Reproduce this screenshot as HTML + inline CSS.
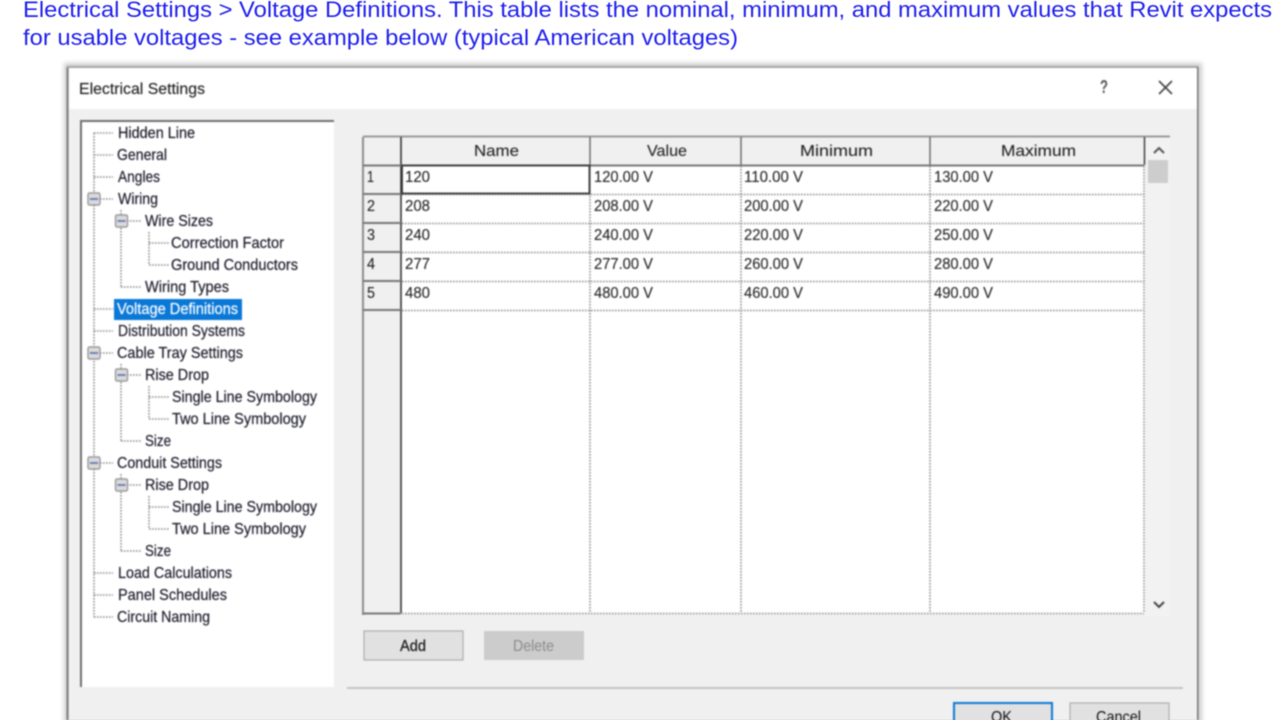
<!DOCTYPE html>
<html><head><meta charset="utf-8"><title>Electrical Settings</title>
<style>
html,body{margin:0;padding:0;background:#fff;width:1280px;height:720px;overflow:hidden}
svg{position:absolute;left:0;top:0;display:block}
text{font-family:"Liberation Sans",sans-serif}
#d{filter:blur(.7px)}
#t{filter:blur(.55px)}
#s{filter:blur(2.5px)}
.x text{font-size:16px;fill:#1c1c2c;stroke:#1c1c2c;stroke-width:.2px}
.g text{font-size:16px;fill:#222;stroke:#222;stroke-width:.1px}
.dot{stroke:#8c8c8c;stroke-width:1.5;stroke-dasharray:1.6 1.4;fill:none}
.b{fill:#dadada;stroke:#999;stroke-width:1.4}
.m{fill:#7080b8}
</style></head>
<body>
<svg width="1280" height="720" viewBox="0 0 1280 720" xmlns="http://www.w3.org/2000/svg">
<g id="t" fill="#2020ee" font-size="22.5">
<text x="23" y="17" textLength="1249" lengthAdjust="spacingAndGlyphs">Electrical Settings &gt; Voltage Definitions. This table lists the nominal, minimum, and maximum values that Revit expects</text>
<text x="23" y="45" textLength="715" lengthAdjust="spacingAndGlyphs">for usable voltages - see example below (typical American voltages)</text>
</g>
<rect id="s" x="64" y="63" width="1138" height="670" fill="#cfcfcf"/>
<g id="d">
<path d="M67.500 720 V67" stroke="#808080" stroke-width="2"/>
<path d="M67 67 H1198" stroke="#a8a8a8" stroke-width="2"/>
<path d="M1197.500 67 V720" stroke="#777" stroke-width="2"/>
<rect x="69" y="68" width="1128" height="652" fill="#f0f0f0"/>
<rect x="69" y="68" width="1128" height="41" fill="#fff"/>
<text x="79" y="94" font-size="16" fill="#222" stroke="#222" stroke-width=".15" textLength="126" lengthAdjust="spacingAndGlyphs">Electrical Settings</text>
<text x="1100" y="93" font-size="18" font-weight="bold" fill="#555" textLength="8" lengthAdjust="spacingAndGlyphs">?</text>
<path d="M1159 81 L1172 94 M1172 81 L1159 94" stroke="#444" stroke-width="1.600" fill="none"/>

<!-- tree -->
<rect x="80" y="120" width="254" height="567" fill="#fff"/>
<path d="M81 687 V121 H334" stroke="#6e6e6e" stroke-width="2" fill="none"/>
<path class="dot" d="M94 133 V617 M94 133 H113 M94 155 H113 M94 177 H113 M94 199 H113 M94 309 H113 M94 331 H113 M94 353 H113 M94 463 H113 M94 573 H113 M94 595 H113 M94 617 H113
M121 210 V287 M121 221 H141 M121 287 H141 M149 232 V265 M149 243 H169 M149 265 H169
M121 364 V441 M121 375 H141 M121 441 H141 M149 386 V419 M149 397 H169 M149 419 H169
M121 474 V551 M121 485 H141 M121 551 H141 M149 496 V529 M149 507 H169 M149 529 H169"/>
<g>
<rect class="b" x="88" y="193" width="12" height="12" rx="1.500"/><rect class="m" x="90" y="198" width="8" height="2"/>
<rect class="b" x="115.500" y="215" width="12" height="12" rx="1.500"/><rect class="m" x="117.500" y="220" width="8" height="2"/>
<rect class="b" x="88" y="347" width="12" height="12" rx="1.500"/><rect class="m" x="90" y="352" width="8" height="2"/>
<rect class="b" x="115.500" y="369" width="12" height="12" rx="1.500"/><rect class="m" x="117.500" y="374" width="8" height="2"/>
<rect class="b" x="88" y="457" width="12" height="12" rx="1.500"/><rect class="m" x="90" y="462" width="8" height="2"/>
<rect class="b" x="115.500" y="479" width="12" height="12" rx="1.500"/><rect class="m" x="117.500" y="484" width="8" height="2"/>
</g>
<rect x="114" y="299" width="128" height="21" fill="#0a78d7"/>
<g class="x">
<text x="118" y="138" textLength="77" lengthAdjust="spacingAndGlyphs">Hidden Line</text>
<text x="117" y="160" textLength="50" lengthAdjust="spacingAndGlyphs">General</text>
<text x="118" y="182" textLength="42" lengthAdjust="spacingAndGlyphs">Angles</text>
<text x="118" y="204" textLength="40" lengthAdjust="spacingAndGlyphs">Wiring</text>
<text x="145" y="226" textLength="68" lengthAdjust="spacingAndGlyphs">Wire Sizes</text>
<text x="171" y="248" textLength="113" lengthAdjust="spacingAndGlyphs">Correction Factor</text>
<text x="171" y="270" textLength="127" lengthAdjust="spacingAndGlyphs">Ground Conductors</text>
<text x="145" y="292" textLength="84" lengthAdjust="spacingAndGlyphs">Wiring Types</text>
<text x="117" y="314" textLength="121" lengthAdjust="spacingAndGlyphs" style="fill:#fff;stroke:#fff">Voltage Definitions</text>
<text x="118" y="336" textLength="127" lengthAdjust="spacingAndGlyphs">Distribution Systems</text>
<text x="117" y="358" textLength="126" lengthAdjust="spacingAndGlyphs">Cable Tray Settings</text>
<text x="145" y="380" textLength="64" lengthAdjust="spacingAndGlyphs">Rise Drop</text>
<text x="172" y="402" textLength="145" lengthAdjust="spacingAndGlyphs">Single Line Symbology</text>
<text x="172" y="424" textLength="134" lengthAdjust="spacingAndGlyphs">Two Line Symbology</text>
<text x="145" y="446" textLength="26" lengthAdjust="spacingAndGlyphs">Size</text>
<text x="117" y="468" textLength="105" lengthAdjust="spacingAndGlyphs">Conduit Settings</text>
<text x="145" y="490" textLength="64" lengthAdjust="spacingAndGlyphs">Rise Drop</text>
<text x="172" y="512" textLength="145" lengthAdjust="spacingAndGlyphs">Single Line Symbology</text>
<text x="172" y="534" textLength="134" lengthAdjust="spacingAndGlyphs">Two Line Symbology</text>
<text x="145" y="556" textLength="26" lengthAdjust="spacingAndGlyphs">Size</text>
<text x="118" y="578" textLength="114" lengthAdjust="spacingAndGlyphs">Load Calculations</text>
<text x="118" y="600" textLength="109" lengthAdjust="spacingAndGlyphs">Panel Schedules</text>
<text x="117" y="622" textLength="93" lengthAdjust="spacingAndGlyphs">Circuit Naming</text>
</g>

<!-- grid -->
<rect x="1145" y="136" width="25" height="480" fill="#f2f2f2"/>
<rect x="401" y="165" width="744" height="449" fill="#fff"/>
<rect x="363" y="137" width="782" height="28" fill="#f0f0f0"/>
<path d="M363 136.500 H1170" stroke="#999" stroke-width="2"/>
<path d="M363 137 V615" stroke="#8c8c8c" stroke-width="2"/>
<path d="M401 137 V613" stroke="#333" stroke-width="1.600"/>
<path d="M590 137 V165 M741 137 V165 M930 137 V165" stroke="#666" stroke-width="1.400"/>
<path d="M1144.500 137 V165" stroke="#333" stroke-width="1.400"/>
<path d="M363 165.500 H1144" stroke="#777" stroke-width="2"/>
<path d="M363 194 H401 M363 223 H401 M363 252 H401 M363 281 H401 M363 310 H401 M363 613.500 H401" stroke="#777" stroke-width="2"/>
<path class="dot" d="M590 166 V613 M741 166 V613 M930 166 V613 M1144 166 V613 M402 194.500 H1144 M402 223.500 H1144 M402 252.500 H1144 M402 281.500 H1144 M402 310.500 H1144 M402 613.500 H1144"/>
<rect x="402" y="165.500" width="187.500" height="28" fill="#fff" stroke="#333" stroke-width="1.800"/>
<g class="g">
<text x="474" y="156" textLength="45" lengthAdjust="spacingAndGlyphs">Name</text>
<text x="647" y="156" textLength="40" lengthAdjust="spacingAndGlyphs">Value</text>
<text x="800" y="156" textLength="73" lengthAdjust="spacingAndGlyphs">Minimum</text>
<text x="1001" y="156" textLength="75" lengthAdjust="spacingAndGlyphs">Maximum</text>

<text x="367" y="182" textLength="7" lengthAdjust="spacingAndGlyphs">1</text><text x="405" y="182" textLength="25" lengthAdjust="spacingAndGlyphs">120</text><text x="594" y="182" textLength="59" lengthAdjust="spacingAndGlyphs">120.00 V</text><text x="744" y="182" textLength="59" lengthAdjust="spacingAndGlyphs">110.00 V</text><text x="934" y="182" textLength="59" lengthAdjust="spacingAndGlyphs">130.00 V</text>
<text x="367" y="211" textLength="8" lengthAdjust="spacingAndGlyphs">2</text><text x="405" y="211" textLength="25" lengthAdjust="spacingAndGlyphs">208</text><text x="594" y="211" textLength="59" lengthAdjust="spacingAndGlyphs">208.00 V</text><text x="744" y="211" textLength="59" lengthAdjust="spacingAndGlyphs">200.00 V</text><text x="934" y="211" textLength="59" lengthAdjust="spacingAndGlyphs">220.00 V</text>
<text x="367" y="240" textLength="8" lengthAdjust="spacingAndGlyphs">3</text><text x="405" y="240" textLength="25" lengthAdjust="spacingAndGlyphs">240</text><text x="594" y="240" textLength="59" lengthAdjust="spacingAndGlyphs">240.00 V</text><text x="744" y="240" textLength="59" lengthAdjust="spacingAndGlyphs">220.00 V</text><text x="934" y="240" textLength="59" lengthAdjust="spacingAndGlyphs">250.00 V</text>
<text x="367" y="269" textLength="8" lengthAdjust="spacingAndGlyphs">4</text><text x="405" y="269" textLength="25" lengthAdjust="spacingAndGlyphs">277</text><text x="594" y="269" textLength="59" lengthAdjust="spacingAndGlyphs">277.00 V</text><text x="744" y="269" textLength="59" lengthAdjust="spacingAndGlyphs">260.00 V</text><text x="934" y="269" textLength="59" lengthAdjust="spacingAndGlyphs">280.00 V</text>
<text x="367" y="298" textLength="8" lengthAdjust="spacingAndGlyphs">5</text><text x="405" y="298" textLength="25" lengthAdjust="spacingAndGlyphs">480</text><text x="594" y="298" textLength="59" lengthAdjust="spacingAndGlyphs">480.00 V</text><text x="744" y="298" textLength="59" lengthAdjust="spacingAndGlyphs">460.00 V</text><text x="934" y="298" textLength="59" lengthAdjust="spacingAndGlyphs">490.00 V</text>
</g>
<!-- scrollbar -->
<path d="M1154 153 L1159 148 L1164 153" stroke="#555" stroke-width="2" fill="none"/>
<rect x="1148" y="160" width="20" height="23" fill="#cdcdcd"/>
<path d="M1154 602 L1159 607 L1164 602" stroke="#444" stroke-width="2" fill="none"/>

<!-- buttons -->
<rect x="364" y="631" width="99" height="29" fill="#e1e1e1" stroke="#adadad" stroke-width="1.200"/>
<text x="400" y="651" font-size="16" fill="#111" stroke="#111" stroke-width=".2" textLength="26" lengthAdjust="spacingAndGlyphs">Add</text>
<rect x="484" y="631" width="100" height="29" fill="#cccccc"/>
<text x="513" y="651" font-size="16" fill="#8a8a8a" textLength="41" lengthAdjust="spacingAndGlyphs">Delete</text>
<path d="M347 688 H1183" stroke="#c4c4c4" stroke-width="2"/>
<rect x="954" y="703" width="98" height="30" fill="#e1e1e1" stroke="#0a78d7" stroke-width="2"/>
<text x="991" y="722" font-size="16" fill="#111" textLength="21" lengthAdjust="spacingAndGlyphs">OK</text>
<rect x="1070" y="703" width="99" height="30" fill="#e1e1e1" stroke="#adadad" stroke-width="1.200"/>
<text x="1096" y="722" font-size="16" fill="#111" textLength="45" lengthAdjust="spacingAndGlyphs">Cancel</text>
</g>
</svg>
</body></html>
